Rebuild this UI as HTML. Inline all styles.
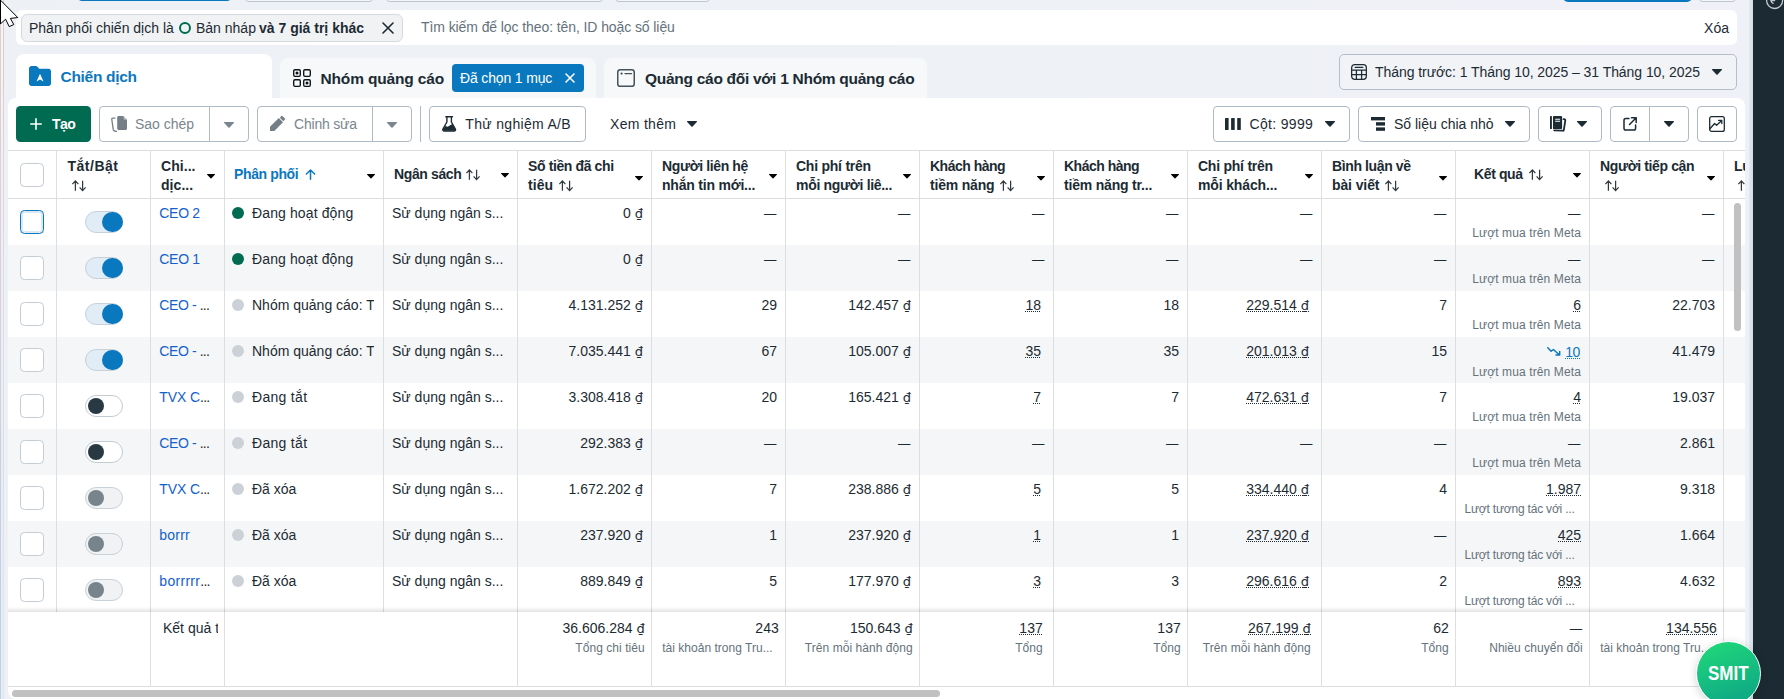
<!DOCTYPE html>
<html lang="vi"><head><meta charset="utf-8"><title>Trình quản lý quảng cáo</title><style>
*{box-sizing:border-box;margin:0;padding:0}
html,body{width:1784px;height:699px;overflow:hidden}
body{position:relative;font-family:"Liberation Sans",sans-serif;font-size:14px;color:#1c2b33;background:linear-gradient(90deg,#edf1f5 0%,#eef1f6 60%,#f0f1f8 100%);line-height:20px}
.a{position:absolute}
.t{position:absolute;white-space:nowrap}
.b{font-weight:700}
.sec{color:#65727b}
.s12{font-size:12px;line-height:16px;letter-spacing:0.05px}
.btn{position:absolute;height:36px;top:106px;border:1px solid #afbac7;border-radius:4px;background:#fff}
.dot{background:linear-gradient(90deg,#1c2b33 50%,rgba(0,0,0,0) 50%) 0 16px/2px 1px repeat-x}
.dotb{color:#0a78be;letter-spacing:-0.4px;background:linear-gradient(90deg,#0a78be 50%,rgba(0,0,0,0) 50%) 0 16px/2px 1px repeat-x}
.row{position:absolute;left:8px;width:1737px;height:46px}
.alt{background:#f5f6f7}
.vl{position:absolute;width:1px;background:#dcdee1}
.cb{position:absolute;left:20px;width:24px;height:24px;border:1px solid #c3cbd3;border-radius:4.5px;background:#fff}
.tg{position:absolute;left:85px;width:38px;height:22px;border-radius:11px}
.tg i{position:absolute;border-radius:50%}
.on{background:#e0edf7;border:1px solid #c9d0d9}
.on i{width:20.4px;height:20.4px;right:-0.5px;top:-0.2px;background:#0a78be}
.off{background:#fff;border:1px solid #c3cbd3}
.off i{width:16px;height:16px;left:2px;top:2px;background:#283943}
.dis{background:#f0f2f4;border:1px solid #c9d0d8}
.dis i{width:16px;height:16px;left:2px;top:2px;background:#77848c}
.st{position:absolute;width:12px;height:12px;border-radius:50%}
.dg{font-family:"DejaVu Sans",sans-serif;font-size:13px}
svg{position:absolute;overflow:visible}
</style></head><body>
<div class="a" style="left:0;top:0;width:1px;height:699px;background:linear-gradient(180deg,#dccfcf 10%,#d9d2da 32%,#c4cfdc 88%)"></div>
<div class="a" style="left:1px;top:0;width:2px;height:699px;background:linear-gradient(180deg,#fdf0ee 10%,#f3ecf4 32%,#e2eefa 88%)"></div>
<div class="a" style="left:3px;top:0;width:1px;height:699px;background:linear-gradient(180deg,#c9d1dc 10%,#d6dde3 32%,#dfe3e8 88%)"></div>
<div class="a" style="left:1745px;top:0;width:8px;height:699px;background:#eef1f5"></div>
<div class="a" style="left:1749px;top:0;width:4px;height:699px;background:linear-gradient(90deg,#e3e9f0,#d3dce6)"></div>
<div class="a" style="left:1753px;top:0;width:31px;height:699px;background:#1c2b33"></div>
<svg style="left:1765px;top:-9px" width="19" height="19" viewBox="0 0 19 19" fill="none" stroke="#c3cbd1" stroke-width="1.3" stroke-linecap="round"><circle cx="9.6" cy="9.5" r="8"/><path d="M9.6 9.5L5.8 9.6M5.8 9.6c.3 1.2 1.2 2.2 2.3 2.7"/></svg>
<div class="a" style="left:76.5px;top:-31px;width:155.5px;height:32px;background:#0a78be;border-radius:5px"></div>
<div class="a" style="left:243.5px;top:-31px;width:130px;height:32.5px;border:1px solid #bcc5cf;border-radius:5px;background:#f4f6f8"></div>
<div class="a" style="left:384.5px;top:-31px;width:219px;height:32.5px;border:1px solid #bcc5cf;border-radius:5px;background:#f4f6f8"></div>
<div class="a" style="left:614px;top:-31px;width:97px;height:32.5px;border:1px solid #bcc5cf;border-radius:5px;background:#f4f6f8"></div>
<div class="a" style="left:1562.5px;top:-30px;width:129.5px;height:31.7px;background:#0a78be;border-radius:5px"></div>
<div class="a" style="left:1698px;top:-31px;width:38.5px;height:32.5px;border:1px solid #bcc5cf;border-radius:5px;background:#f4f6f8"></div>
<div class="a" style="left:16px;top:10px;width:1721px;height:35px;background:#fff;border-radius:6px"></div>
<div class="a" style="left:21px;top:14px;width:382px;height:28px;background:#f1f2f4;border:1px solid #d5dae0;border-radius:6px"></div>
<span class="t " style="left:29px;top:18px;">Phân phối chiến dịch là</span>
<div class="a" style="left:179px;top:22px;width:12px;height:12px;border:2px solid #006b50;border-radius:50%"></div>
<span class="t " style="left:196px;top:18px;">Bản nháp</span>
<span class="t b" style="left:259px;top:18px;">và 7 giá trị khác</span>
<svg style="left:382px;top:22px" width="12" height="12" viewBox="0 0 12 12" stroke="#1c2b33" stroke-width="1.6" stroke-linecap="round"><path d="M1 1l10 10M11 1L1 11"/></svg>
<span class="t sec" style="left:421px;top:17px;letter-spacing:-0.09px">Tìm kiếm để lọc theo: tên, ID hoặc số liệu</span>
<span class="t " style="right:55px;top:18px;">Xóa</span>
<div class="a" style="left:16px;top:54px;width:256px;height:50px;background:#fff;border-radius:8px 8px 0 0"></div>
<div class="a" style="left:280px;top:58px;width:316px;height:40px;background:#f6f8fa;border-radius:8px 8px 0 0"></div>
<div class="a" style="left:604px;top:58px;width:323px;height:40px;background:#f6f8fa;border-radius:8px 8px 0 0"></div>
<svg style="left:29px;top:66px" width="22" height="20" viewBox="0 0 22 20"><path d="M0 2.5C0 1.1 1.1 0 2.5 0h4.2c.8 0 1.5.3 2 1l1 1.2c.3.4.8.6 1.3.6h8.5C20.9 2.8 22 3.9 22 5.3v12.2c0 1.4-1.1 2.5-2.5 2.5h-17C1.1 20 0 18.9 0 17.5z" fill="#0a78be"/><path d="M11 7.7l3.5 7.7-3.5-1.8-3.5 1.8z" fill="#fff"/></svg>
<span class="t b" style="left:60.5px;top:66px;color:#0a78be;font-size:15.5px;line-height:21px;letter-spacing:-0.3px">Chiến dịch</span>
<svg style="left:293px;top:69px" width="18" height="18" viewBox="0 0 18 18" fill="none" stroke="#0a1317" stroke-width="1.350"><rect x=".7" y=".7" width="6.6" height="6.6" rx="1.3"/><rect x="10.7" y=".7" width="6.6" height="6.6" rx="1.3"/><rect x=".7" y="10.7" width="6.6" height="6.6" rx="1.3"/><rect x="10.7" y="10.7" width="6.6" height="6.6" rx="1.3"/><circle cx="4" cy="4" r="1.5" fill="#0a1317" stroke="none"/><circle cx="14" cy="14" r="1.5" fill="#0a1317" stroke="none"/></svg>
<span class="t b" style="left:320.5px;top:68px;font-size:15.5px;line-height:21px;letter-spacing:-0.16px">Nhóm quảng cáo</span>
<div class="a" style="left:452px;top:64px;width:132px;height:28px;background:#0a78be;border-radius:4px"></div>
<span class="t " style="left:460px;top:68px;color:#fff;letter-spacing:-0.15px">Đã chọn 1 mục</span>
<svg style="left:565px;top:73px" width="10" height="10" viewBox="0 0 10 10" stroke="#fff" stroke-width="1.6" stroke-linecap="round"><path d="M1 1l8 8M9 1L1 9"/></svg>
<svg style="left:617px;top:69px" width="18" height="18" viewBox="0 0 18 18" fill="none" stroke="#44525c" stroke-width="1.5"><rect x=".75" y=".75" width="16.5" height="16.5" rx="2.6"/><path d="M8 4.6h6.6" stroke-width="1.3" stroke-linecap="round"/><circle cx="4.6" cy="4.6" r="1.150" fill="#44525c" stroke="none"/></svg>
<span class="t b" style="left:645px;top:68px;font-size:15.5px;line-height:21px;letter-spacing:-0.28px">Quảng cáo đối với 1 Nhóm quảng cáo</span>
<div class="a" style="left:1339px;top:54px;width:398px;height:36px;background:#f1f3f6;border:1px solid #b4becb;border-radius:5px"></div>
<svg style="left:1351px;top:64px" width="16" height="16" viewBox="0 0 16 16" fill="none" stroke="#1c2b33" stroke-width="1.25"><rect x=".65" y=".65" width="14.7" height="14.7" rx="3"/><path d="M4.2 3.4h7.6" stroke-linecap="round"/><path d="M.65 6h14.7M.65 10.6h14.7M5.4 6v9.3M10.6 6v9.3"/></svg>
<span class="t " style="left:1375px;top:62px;letter-spacing:-0.06px">Tháng trước: 1 Tháng 10, 2025 – 31 Tháng 10, 2025</span>
<svg style="left:1711.7px;top:69px" width="10" height="6" viewBox="0 0 10 6"><path d="M0.6 0h8.8c.5 0 .8.6.4 1L5.6 5.5c-.3.4-.9.4-1.2 0L.2 1C-.2.6.1 0 .6 0z" fill="#1c2b33"/></svg>
<div class="a" style="left:8px;top:98px;width:1737px;height:601px;background:#fff;border-radius:8px 8px 0 8px"></div>
<div class="a" style="left:16px;top:106px;width:75px;height:36px;background:#006b50;border-radius:4.5px"></div>
<svg style="left:30px;top:118px" width="12" height="12" viewBox="0 0 12 12" stroke="#fff" stroke-width="1.6" stroke-linecap="round"><path d="M6 .8v10.4M.8 6h10.4"/></svg>
<span class="t b" style="left:52px;top:114px;color:#fff;letter-spacing:-0.6px">Tạo</span>
<div class="btn" style="left:99px;width:150px"></div>
<div class="a" style="left:209px;top:107px;width:1px;height:34px;background:#afbac7"></div>
<svg style="left:111px;top:116px" width="16" height="16" viewBox="0 0 16 16"><path d="M6.2 1.5C6.2.700 6.9 0 7.7 0h4.5L16 3.8v8.7c0 .8-.7 1.5-1.5 1.5H7.7c-.8 0-1.5-.7-1.5-1.5z" fill="#757e87"/><path d="M12.6 0v2.6c0 .6.5 1.1 1.1 1.1H16z" fill="#b9bfc5"/><path d="M3.9 2.2H1.7c-.6 0-1 .5-.9 1.1l1.5 10.6c.1.6.6 1 1.2 1.1l2 .3" fill="none" stroke="#757e87" stroke-width="1.3" stroke-linecap="round"/></svg>
<span class="t " style="left:135px;top:114px;color:#7a868e">Sao chép</span>
<svg style="left:224px;top:122px" width="10" height="6" viewBox="0 0 10 6"><path d="M0.6 0h8.8c.5 0 .8.6.4 1L5.6 5.5c-.3.4-.9.4-1.2 0L.2 1C-.2.6.1 0 .6 0z" fill="#7a868e"/></svg>
<div class="btn" style="left:257px;width:155px"></div>
<div class="a" style="left:372px;top:107px;width:1px;height:34px;background:#afbac7"></div>
<svg style="left:270px;top:116px" width="15" height="15" viewBox="0 0 15 15" fill="#757e87"><path d="M0 15v-4.3L8.8 2l4.2 4.2L4.3 15z"/><rect x="-2.5" y="-1.5" width="5" height="3" rx=".7" transform="translate(12.6 2.4) rotate(45)"/></svg>
<span class="t " style="left:294px;top:114px;color:#7a868e;letter-spacing:-0.2px">Chỉnh sửa</span>
<svg style="left:387px;top:122px" width="10" height="6" viewBox="0 0 10 6"><path d="M0.6 0h8.8c.5 0 .8.6.4 1L5.6 5.5c-.3.4-.9.4-1.2 0L.2 1C-.2.6.1 0 .6 0z" fill="#7a868e"/></svg>
<div class="a" style="left:420px;top:106px;width:1px;height:36px;background:#afbac7"></div>
<div class="btn" style="left:429px;width:157px"></div>
<svg style="left:442px;top:116px" width="14.3" height="15.7" viewBox="0 0 14.3 15.7"><path d="M3.8.7h6.7M4.9.7v5.3L.9 13.1c-.5 1 .2 1.9 1.2 1.9h10.1c1 0 1.7-.9 1.2-1.9L9.4 6V.7" fill="none" stroke="#1c2b33" stroke-width="1.4" stroke-linecap="round" stroke-linejoin="round"/><path d="M3.4 9.9l2.3.8 4.5-2.6 3.1 5.3c.3.6-.1 1.3-.8 1.3H1.8c-.7 0-1.1-.7-.8-1.3z" fill="#1c2b33"/></svg>
<span class="t " style="left:465.3px;top:114px;letter-spacing:0.32px">Thử nghiệm A/B</span>
<span class="t " style="left:610px;top:114px;letter-spacing:0.3px">Xem thêm</span>
<svg style="left:687px;top:121px" width="10" height="6" viewBox="0 0 10 6"><path d="M0.6 0h8.8c.5 0 .8.6.4 1L5.6 5.5c-.3.4-.9.4-1.2 0L.2 1C-.2.6.1 0 .6 0z" fill="#1c2b33"/></svg>
<div class="btn" style="left:1213px;width:137px"></div>
<svg style="left:1225px;top:118px" width="16" height="12" viewBox="0 0 16 12" fill="#1c2b33"><rect x="0" width="3.6" height="12" rx=".4"/><rect x="6.1" width="3.6" height="12" rx=".4"/><rect x="12.2" width="3.6" height="12" rx=".4"/></svg>
<span class="t " style="left:1249.5px;top:114px;letter-spacing:0.33px">Cột: 9999</span>
<svg style="left:1325px;top:121px" width="10" height="6" viewBox="0 0 10 6"><path d="M0.6 0h8.8c.5 0 .8.6.4 1L5.6 5.5c-.3.4-.9.4-1.2 0L.2 1C-.2.6.1 0 .6 0z" fill="#1c2b33"/></svg>
<div class="btn" style="left:1358px;width:172px"></div>
<svg style="left:1371px;top:117px" width="14" height="14" viewBox="0 0 14 14" fill="#1c2b33"><rect x="0" y="0" width="14" height="3.4"/><rect x="5" y="5.2" width="9" height="3.4"/><rect x="5" y="10.4" width="9" height="3.4"/></svg>
<span class="t " style="left:1394px;top:114px;">Số liệu chia nhỏ</span>
<svg style="left:1505px;top:121px" width="10" height="6" viewBox="0 0 10 6"><path d="M0.6 0h8.8c.5 0 .8.6.4 1L5.6 5.5c-.3.4-.9.4-1.2 0L.2 1C-.2.6.1 0 .6 0z" fill="#1c2b33"/></svg>
<div class="btn" style="left:1538px;width:64px"></div>
<svg style="left:1550px;top:116px" width="16" height="16" viewBox="0 0 16 16"><rect x="0" y="0" width="1.9" height="13" rx=".5" fill="#1c2b33"/><path d="M3 1.1C3 .5 3.5 0 4.1 0h6.9c.6 0 1.1.5 1.1 1.1v10.8c0 .6-.5 1.1-1.1 1.1H3z" fill="#1c2b33"/><path d="M5.2 3.3h4.9M5.2 5.3h4.9" stroke="#fff" stroke-width="1.1"/><path d="M13.5 3.1l1.2.3c.4.1.7.5.6.9l-1.5 9.8c-.1.4-.5.7-.9.6L4.2 14.3" fill="none" stroke="#1c2b33" stroke-width="1.8" stroke-linecap="round" stroke-linejoin="round"/></svg>
<svg style="left:1577px;top:121px" width="10" height="6" viewBox="0 0 10 6"><path d="M0.6 0h8.8c.5 0 .8.6.4 1L5.6 5.5c-.3.4-.9.4-1.2 0L.2 1C-.2.6.1 0 .6 0z" fill="#1c2b33"/></svg>
<div class="btn" style="left:1610px;width:79px"></div>
<div class="a" style="left:1649px;top:107px;width:1px;height:34px;background:#afbac7"></div>
<svg style="left:1623px;top:117px" width="14" height="14" viewBox="0 0 14 14" fill="none" stroke="#1c2b33" stroke-width="1.5" stroke-linecap="round" stroke-linejoin="round"><path d="M6 1.5H2.8C1.8 1.5 1 2.3 1 3.3v8c0 1 .8 1.8 1.8 1.8h8c1 0 1.8-.8 1.8-1.8V8M8.5 .8h4.7v4.7M13 1L6.5 7.5"/></svg>
<svg style="left:1664px;top:121px" width="10" height="6" viewBox="0 0 10 6"><path d="M0.6 0h8.8c.5 0 .8.6.4 1L5.6 5.5c-.3.4-.9.4-1.2 0L.2 1C-.2.6.1 0 .6 0z" fill="#1c2b33"/></svg>
<div class="btn" style="left:1697px;width:40px"></div>
<svg style="left:1709px;top:116px" width="16" height="16" viewBox="0 0 16 16" fill="none" stroke="#1c2b33" stroke-width="1.3" stroke-linecap="round" stroke-linejoin="round"><rect x=".7" y=".7" width="14.6" height="14.6" rx="1.9"/><path d="M.9 12.8l4.7-5.3 2 1.7 4.9-4.5M9.6 4.4h3.2v3.2"/></svg>
<div class="a" style="left:8px;top:150px;width:1737px;height:1px;background:#dcdee1"></div>
<div class="a" style="left:8px;top:198px;width:1737px;height:1px;background:#dcdee1"></div>
<div class="row alt" style="top:245px"></div>
<div class="row alt" style="top:337px"></div>
<div class="row alt" style="top:429px"></div>
<div class="row alt" style="top:521px"></div>
<div class="vl" style="left:56px;top:151px;height:461px"></div>
<div class="vl" style="left:150px;top:151px;height:461px"></div>
<div class="vl" style="left:224px;top:151px;height:461px"></div>
<div class="vl" style="left:383px;top:151px;height:461px"></div>
<div class="vl" style="left:517px;top:151px;height:461px"></div>
<div class="vl" style="left:651px;top:151px;height:461px"></div>
<div class="vl" style="left:785px;top:151px;height:461px"></div>
<div class="vl" style="left:919px;top:151px;height:461px"></div>
<div class="vl" style="left:1053px;top:151px;height:461px"></div>
<div class="vl" style="left:1187px;top:151px;height:461px"></div>
<div class="vl" style="left:1321px;top:151px;height:461px"></div>
<div class="vl" style="left:1455px;top:151px;height:461px"></div>
<div class="vl" style="left:1589px;top:151px;height:461px"></div>
<div class="vl" style="left:1723px;top:151px;height:461px"></div>
<div class="cb" style="top:163px"></div>
<span class="t b" style="left:67.5px;top:156px;letter-spacing:0.5px">Tắt/Bật</span>
<svg style="left:71.7px;top:180.2px" width="14" height="11.6" viewBox="0 0 14 11.6" fill="none" stroke="#333a3e" stroke-width="1.25" stroke-linejoin="miter"><path d="M3.4 10.8V1.2M.4 4.2L3.4.9l3 3.3M10.6.8v9.6M7.6 7.4l3 3.3 3-3.3"/></svg>
<span class="t b" style="left:161px;top:156px;letter-spacing:0.05px">Chi...</span>
<span class="t b" style="left:161px;top:175px;letter-spacing:0.05px">dịc...</span>
<svg style="left:207px;top:174.0px" width="8" height="4.5" viewBox="0 0 8.5 4.7"><path d="M.5 0h7.5c.4 0 .6.5.3.8L4.7 4.5c-.25.250-.65.250-.9 0L.2.8C-.1.5.1 0 .5 0z" fill="#000"/></svg>
<span class="t b" style="left:234px;top:164px;color:#0a78be;letter-spacing:-0.38px">Phân phối</span>
<svg style="left:305px;top:169px" width="11" height="11" viewBox="0 0 11 11" fill="none" stroke="#0a78be" stroke-width="1.5" stroke-linecap="round" stroke-linejoin="round"><path d="M5.5 10.2V1M1.4 5L5.5 1l4.1 4"/></svg>
<svg style="left:367px;top:173.5px" width="8" height="4.5" viewBox="0 0 8.5 4.7"><path d="M.5 0h7.5c.4 0 .6.5.3.8L4.7 4.5c-.25.250-.65.250-.9 0L.2.8C-.1.5.1 0 .5 0z" fill="#000"/></svg>
<span class="t b" style="left:394px;top:164px;letter-spacing:-0.38px">Ngân sách</span>
<svg style="left:466.2px;top:169.1px" width="14" height="11.6" viewBox="0 0 14 11.6" fill="none" stroke="#333a3e" stroke-width="1.25" stroke-linejoin="miter"><path d="M3.4 10.8V1.2M.4 4.2L3.4.9l3 3.3M10.6.8v9.6M7.6 7.4l3 3.3 3-3.3"/></svg>
<svg style="left:501px;top:173.0px" width="8" height="4.5" viewBox="0 0 8.5 4.7"><path d="M.5 0h7.5c.4 0 .6.5.3.8L4.7 4.5c-.25.250-.65.250-.9 0L.2.8C-.1.5.1 0 .5 0z" fill="#000"/></svg>
<span class="t b" style="left:528px;top:156px;letter-spacing:-0.38px">Số tiền đã chi</span>
<span class="t b" style="left:528px;top:175px;letter-spacing:0.04px">tiêu</span>
<svg style="left:559px;top:180.2px" width="14" height="11.6" viewBox="0 0 14 11.6" fill="none" stroke="#333a3e" stroke-width="1.25" stroke-linejoin="miter"><path d="M3.4 10.8V1.2M.4 4.2L3.4.9l3 3.3M10.6.8v9.6M7.6 7.4l3 3.3 3-3.3"/></svg>
<svg style="left:635px;top:175.8px" width="8" height="4.5" viewBox="0 0 8.5 4.7"><path d="M.5 0h7.5c.4 0 .6.5.3.8L4.7 4.5c-.25.250-.65.250-.9 0L.2.8C-.1.5.1 0 .5 0z" fill="#000"/></svg>
<span class="t b" style="left:662px;top:156px;letter-spacing:-0.38px">Người liên hệ</span>
<span class="t b" style="left:662px;top:175px;letter-spacing:-0.21px">nhắn tin mới...</span>
<svg style="left:769px;top:173.8px" width="8" height="4.5" viewBox="0 0 8.5 4.7"><path d="M.5 0h7.5c.4 0 .6.5.3.8L4.7 4.5c-.25.250-.65.250-.9 0L.2.8C-.1.5.1 0 .5 0z" fill="#000"/></svg>
<span class="t b" style="left:796px;top:156px;letter-spacing:-0.24px">Chi phí trên</span>
<span class="t b" style="left:796px;top:175px;letter-spacing:-0.31px">mỗi người liê...</span>
<svg style="left:903px;top:173.8px" width="8" height="4.5" viewBox="0 0 8.5 4.7"><path d="M.5 0h7.5c.4 0 .6.5.3.8L4.7 4.5c-.25.250-.65.250-.9 0L.2.8C-.1.5.1 0 .5 0z" fill="#000"/></svg>
<span class="t b" style="left:930px;top:156px;letter-spacing:-0.5px">Khách hàng</span>
<span class="t b" style="left:930px;top:175px;letter-spacing:-0.19px">tiềm năng</span>
<svg style="left:999.5px;top:180.2px" width="14" height="11.6" viewBox="0 0 14 11.6" fill="none" stroke="#333a3e" stroke-width="1.25" stroke-linejoin="miter"><path d="M3.4 10.8V1.2M.4 4.2L3.4.9l3 3.3M10.6.8v9.6M7.6 7.4l3 3.3 3-3.3"/></svg>
<svg style="left:1037px;top:175.8px" width="8" height="4.5" viewBox="0 0 8.5 4.7"><path d="M.5 0h7.5c.4 0 .6.5.3.8L4.7 4.5c-.25.250-.65.250-.9 0L.2.8C-.1.5.1 0 .5 0z" fill="#000"/></svg>
<span class="t b" style="left:1064px;top:156px;letter-spacing:-0.5px">Khách hàng</span>
<span class="t b" style="left:1064px;top:175px;letter-spacing:-0.19px">tiềm năng tr...</span>
<svg style="left:1171px;top:173.8px" width="8" height="4.5" viewBox="0 0 8.5 4.7"><path d="M.5 0h7.5c.4 0 .6.5.3.8L4.7 4.5c-.25.250-.65.250-.9 0L.2.8C-.1.5.1 0 .5 0z" fill="#000"/></svg>
<span class="t b" style="left:1198px;top:156px;letter-spacing:-0.24px">Chi phí trên</span>
<span class="t b" style="left:1198px;top:175px;letter-spacing:-0.14px">mỗi khách...</span>
<svg style="left:1305px;top:173.8px" width="8" height="4.5" viewBox="0 0 8.5 4.7"><path d="M.5 0h7.5c.4 0 .6.5.3.8L4.7 4.5c-.25.250-.65.250-.9 0L.2.8C-.1.5.1 0 .5 0z" fill="#000"/></svg>
<span class="t b" style="left:1332px;top:156px;letter-spacing:-0.38px">Bình luận về</span>
<span class="t b" style="left:1332px;top:175px;letter-spacing:-0.11px">bài viết</span>
<svg style="left:1385px;top:180.2px" width="14" height="11.6" viewBox="0 0 14 11.6" fill="none" stroke="#333a3e" stroke-width="1.25" stroke-linejoin="miter"><path d="M3.4 10.8V1.2M.4 4.2L3.4.9l3 3.3M10.6.8v9.6M7.6 7.4l3 3.3 3-3.3"/></svg>
<svg style="left:1439px;top:175.8px" width="8" height="4.5" viewBox="0 0 8.5 4.7"><path d="M.5 0h7.5c.4 0 .6.5.3.8L4.7 4.5c-.25.250-.65.250-.9 0L.2.8C-.1.5.1 0 .5 0z" fill="#000"/></svg>
<span class="t b" style="left:1474px;top:164px;letter-spacing:-0.38px">Kết quả</span>
<svg style="left:1528.6px;top:169.1px" width="14" height="11.6" viewBox="0 0 14 11.6" fill="none" stroke="#333a3e" stroke-width="1.25" stroke-linejoin="miter"><path d="M3.4 10.8V1.2M.4 4.2L3.4.9l3 3.3M10.6.8v9.6M7.6 7.4l3 3.3 3-3.3"/></svg>
<svg style="left:1573px;top:173.0px" width="8" height="4.5" viewBox="0 0 8.5 4.7"><path d="M.5 0h7.5c.4 0 .6.5.3.8L4.7 4.5c-.25.250-.65.250-.9 0L.2.8C-.1.5.1 0 .5 0z" fill="#000"/></svg>
<span class="t b" style="left:1600px;top:156px;letter-spacing:-0.38px">Người tiếp cận</span>
<svg style="left:1605.2px;top:180.2px" width="14" height="11.6" viewBox="0 0 14 11.6" fill="none" stroke="#333a3e" stroke-width="1.25" stroke-linejoin="miter"><path d="M3.4 10.8V1.2M.4 4.2L3.4.9l3 3.3M10.6.8v9.6M7.6 7.4l3 3.3 3-3.3"/></svg>
<svg style="left:1707px;top:175.8px" width="8" height="4.5" viewBox="0 0 8.5 4.7"><path d="M.5 0h7.5c.4 0 .6.5.3.8L4.7 4.5c-.25.250-.65.250-.9 0L.2.8C-.1.5.1 0 .5 0z" fill="#000"/></svg>
<span class="t b" style="left:1734px;top:156px;letter-spacing:-0.38px;width:11px;overflow:hidden">Lư</span>
<svg style="left:1737.6px;top:180.2px" width="7.4" height="11.6" viewBox="0 0 7.4 11.6" fill="none" stroke="#333a3e" stroke-width="1.25"><path d="M3.4 10.8V1.2M.4 4.2L3.4.9l3 3.3"/></svg>
<div class="cb" style="top:210px;border:1.3px solid #0a78be;box-shadow:0 0 0 2px #dbe9f5 inset;border-radius:4.5px"></div>
<div class="tg on" style="top:211px"><i></i></div>
<span class="t " style="left:159.3px;top:203px;color:#1461cc;letter-spacing:-0.3px">CEO 2</span>
<div class="st" style="left:232px;top:207px;background:#006b50"></div>
<span class="t " style="left:252px;top:203px;letter-spacing:0.12px">Đang hoạt động</span>
<span class="t " style="left:392px;top:203px;">Sử dụng ngân s...</span>
<span class="t " style="right:1141px;top:203px;">0 <span class="dg">₫</span></span>
<span class="t " style="right:1007px;top:203px;"><span style="font-size:12.4px;margin-right:0.6px">—</span></span>
<span class="t " style="right:873px;top:203px;"><span style="font-size:12.4px;margin-right:0.6px">—</span></span>
<span class="t " style="right:739px;top:203px;"><span style="font-size:12.4px;margin-right:0.6px">—</span></span>
<span class="t " style="right:605px;top:203px;"><span style="font-size:12.4px;margin-right:0.6px">—</span></span>
<span class="t " style="right:471px;top:203px;"><span style="font-size:12.4px;margin-right:0.6px">—</span></span>
<span class="t " style="right:337px;top:203px;"><span style="font-size:12.4px;margin-right:0.6px">—</span></span>
<span class="t " style="right:203px;top:203px;"><span style="font-size:12.4px;margin-right:0.6px">—</span></span>
<span class="t s12 sec" style="right:203px;top:225px;letter-spacing:0.12px">Lượt mua trên Meta</span>
<span class="t " style="right:69px;top:203px;"><span style="font-size:12.4px;margin-right:0.6px">—</span></span>
<div class="cb" style="top:256px"></div>
<div class="tg on" style="top:257px"><i></i></div>
<span class="t " style="left:159.3px;top:249px;color:#1461cc;letter-spacing:-0.3px">CEO 1</span>
<div class="st" style="left:232px;top:253px;background:#006b50"></div>
<span class="t " style="left:252px;top:249px;letter-spacing:0.12px">Đang hoạt động</span>
<span class="t " style="left:392px;top:249px;">Sử dụng ngân s...</span>
<span class="t " style="right:1141px;top:249px;">0 <span class="dg">₫</span></span>
<span class="t " style="right:1007px;top:249px;"><span style="font-size:12.4px;margin-right:0.6px">—</span></span>
<span class="t " style="right:873px;top:249px;"><span style="font-size:12.4px;margin-right:0.6px">—</span></span>
<span class="t " style="right:739px;top:249px;"><span style="font-size:12.4px;margin-right:0.6px">—</span></span>
<span class="t " style="right:605px;top:249px;"><span style="font-size:12.4px;margin-right:0.6px">—</span></span>
<span class="t " style="right:471px;top:249px;"><span style="font-size:12.4px;margin-right:0.6px">—</span></span>
<span class="t " style="right:337px;top:249px;"><span style="font-size:12.4px;margin-right:0.6px">—</span></span>
<span class="t " style="right:203px;top:249px;"><span style="font-size:12.4px;margin-right:0.6px">—</span></span>
<span class="t s12 sec" style="right:203px;top:271px;letter-spacing:0.12px">Lượt mua trên Meta</span>
<span class="t " style="right:69px;top:249px;"><span style="font-size:12.4px;margin-right:0.6px">—</span></span>
<div class="cb" style="top:302px"></div>
<div class="tg on" style="top:303px"><i></i></div>
<span class="t " style="left:159.3px;top:295px;"><span style="color:#1461cc;letter-spacing:-0.4px">CEO - </span><span style="letter-spacing:-0.75px">...</span></span>
<div class="st" style="left:232px;top:299px;background:#ccd1d7"></div>
<span class="t " style="left:252px;top:295px;width:122.3px;overflow:hidden">Nhóm quảng cáo: T</span>
<span class="t " style="left:392px;top:295px;">Sử dụng ngân s...</span>
<span class="t " style="right:1141px;top:295px;">4.131.252 <span class="dg">₫</span></span>
<span class="t " style="right:1007px;top:295px;">29</span>
<span class="t " style="right:873px;top:295px;">142.457 <span class="dg">₫</span></span>
<span class="t dot" style="right:743px;top:295px;">18</span>
<span class="t " style="right:605px;top:295px;">18</span>
<span class="t dot" style="right:475px;top:295px;">229.514 <span class="dg">₫</span></span>
<span class="t " style="right:337px;top:295px;">7</span>
<span class="t dot" style="right:203px;top:295px;">6</span>
<span class="t s12 sec" style="right:203px;top:317px;letter-spacing:0.12px">Lượt mua trên Meta</span>
<span class="t " style="right:69px;top:295px;">22.703</span>
<div class="cb" style="top:348px"></div>
<div class="tg on" style="top:349px"><i></i></div>
<span class="t " style="left:159.3px;top:341px;"><span style="color:#1461cc;letter-spacing:-0.4px">CEO - </span><span style="letter-spacing:-0.75px">...</span></span>
<div class="st" style="left:232px;top:345px;background:#ccd1d7"></div>
<span class="t " style="left:252px;top:341px;width:122.3px;overflow:hidden">Nhóm quảng cáo: T</span>
<span class="t " style="left:392px;top:341px;">Sử dụng ngân s...</span>
<span class="t " style="right:1141px;top:341px;">7.035.441 <span class="dg">₫</span></span>
<span class="t " style="right:1007px;top:341px;">67</span>
<span class="t " style="right:873px;top:341px;">105.007 <span class="dg">₫</span></span>
<span class="t dot" style="right:743px;top:341px;">35</span>
<span class="t " style="right:605px;top:341px;">35</span>
<span class="t dot" style="right:475px;top:341px;">201.013 <span class="dg">₫</span></span>
<span class="t " style="right:337px;top:341px;">15</span>
<span class="t dotb" style="right:204px;top:342px;">10</span>
<svg style="left:1547px;top:347.3px" width="14" height="9" viewBox="0 0 14 9" fill="none" stroke="#0a78be" stroke-width="1.5" stroke-linecap="round" stroke-linejoin="round"><path d="M.8 .8l3.3 3.4 2.3-1.7 5.8 5.2M9 8h3.7V4.4"/></svg>
<span class="t s12 sec" style="right:203px;top:364px;letter-spacing:0.12px">Lượt mua trên Meta</span>
<span class="t " style="right:69px;top:341px;">41.479</span>
<div class="cb" style="top:394px"></div>
<div class="tg off" style="top:395px"><i></i></div>
<span class="t " style="left:159.3px;top:387px;"><span style="color:#1461cc;letter-spacing:-0.1px">TVX C</span><span style="letter-spacing:-0.75px">...</span></span>
<div class="st" style="left:232px;top:391px;background:#ccd1d7"></div>
<span class="t " style="left:252px;top:387px;letter-spacing:0.3px">Đang tắt</span>
<span class="t " style="left:392px;top:387px;">Sử dụng ngân s...</span>
<span class="t " style="right:1141px;top:387px;">3.308.418 <span class="dg">₫</span></span>
<span class="t " style="right:1007px;top:387px;">20</span>
<span class="t " style="right:873px;top:387px;">165.421 <span class="dg">₫</span></span>
<span class="t dot" style="right:743px;top:387px;">7</span>
<span class="t " style="right:605px;top:387px;">7</span>
<span class="t dot" style="right:475px;top:387px;">472.631 <span class="dg">₫</span></span>
<span class="t " style="right:337px;top:387px;">7</span>
<span class="t dot" style="right:203px;top:387px;">4</span>
<span class="t s12 sec" style="right:203px;top:409px;letter-spacing:0.12px">Lượt mua trên Meta</span>
<span class="t " style="right:69px;top:387px;">19.037</span>
<div class="cb" style="top:440px"></div>
<div class="tg off" style="top:441px"><i></i></div>
<span class="t " style="left:159.3px;top:433px;"><span style="color:#1461cc;letter-spacing:-0.4px">CEO - </span><span style="letter-spacing:-0.75px">...</span></span>
<div class="st" style="left:232px;top:437px;background:#ccd1d7"></div>
<span class="t " style="left:252px;top:433px;letter-spacing:0.3px">Đang tắt</span>
<span class="t " style="left:392px;top:433px;">Sử dụng ngân s...</span>
<span class="t " style="right:1141px;top:433px;">292.383 <span class="dg">₫</span></span>
<span class="t " style="right:1007px;top:433px;"><span style="font-size:12.4px;margin-right:0.6px">—</span></span>
<span class="t " style="right:873px;top:433px;"><span style="font-size:12.4px;margin-right:0.6px">—</span></span>
<span class="t " style="right:739px;top:433px;"><span style="font-size:12.4px;margin-right:0.6px">—</span></span>
<span class="t " style="right:605px;top:433px;"><span style="font-size:12.4px;margin-right:0.6px">—</span></span>
<span class="t " style="right:471px;top:433px;"><span style="font-size:12.4px;margin-right:0.6px">—</span></span>
<span class="t " style="right:337px;top:433px;"><span style="font-size:12.4px;margin-right:0.6px">—</span></span>
<span class="t " style="right:203px;top:433px;"><span style="font-size:12.4px;margin-right:0.6px">—</span></span>
<span class="t s12 sec" style="right:203px;top:455px;letter-spacing:0.12px">Lượt mua trên Meta</span>
<span class="t " style="right:69px;top:433px;">2.861</span>
<div class="cb" style="top:486px"></div>
<div class="tg dis" style="top:487px"><i></i></div>
<span class="t " style="left:159.3px;top:479px;"><span style="color:#1461cc;letter-spacing:-0.1px">TVX C</span><span style="letter-spacing:-0.75px">...</span></span>
<div class="st" style="left:232px;top:483px;background:#ccd1d7"></div>
<span class="t " style="left:252px;top:479px;">Đã xóa</span>
<span class="t " style="left:392px;top:479px;">Sử dụng ngân s...</span>
<span class="t " style="right:1141px;top:479px;">1.672.202 <span class="dg">₫</span></span>
<span class="t " style="right:1007px;top:479px;">7</span>
<span class="t " style="right:873px;top:479px;">238.886 <span class="dg">₫</span></span>
<span class="t dot" style="right:743px;top:479px;">5</span>
<span class="t " style="right:605px;top:479px;">5</span>
<span class="t dot" style="right:475px;top:479px;">334.440 <span class="dg">₫</span></span>
<span class="t " style="right:337px;top:479px;">4</span>
<span class="t dot" style="right:203px;top:479px;">1.987</span>
<span class="t s12 sec" style="left:1464.5px;top:501px;letter-spacing:-0.195px">Lượt tương tác với ...</span>
<span class="t " style="right:69px;top:479px;">9.318</span>
<div class="cb" style="top:532px"></div>
<div class="tg dis" style="top:533px"><i></i></div>
<span class="t " style="left:159.3px;top:525px;color:#1461cc;letter-spacing:0.2px">borrr</span>
<div class="st" style="left:232px;top:529px;background:#ccd1d7"></div>
<span class="t " style="left:252px;top:525px;">Đã xóa</span>
<span class="t " style="left:392px;top:525px;">Sử dụng ngân s...</span>
<span class="t " style="right:1141px;top:525px;">237.920 <span class="dg">₫</span></span>
<span class="t " style="right:1007px;top:525px;">1</span>
<span class="t " style="right:873px;top:525px;">237.920 <span class="dg">₫</span></span>
<span class="t dot" style="right:743px;top:525px;">1</span>
<span class="t " style="right:605px;top:525px;">1</span>
<span class="t dot" style="right:475px;top:525px;">237.920 <span class="dg">₫</span></span>
<span class="t " style="right:337px;top:525px;"><span style="font-size:12.4px;margin-right:0.6px">—</span></span>
<span class="t dot" style="right:203px;top:525px;">425</span>
<span class="t s12 sec" style="left:1464.5px;top:547px;letter-spacing:-0.195px">Lượt tương tác với ...</span>
<span class="t " style="right:69px;top:525px;">1.664</span>
<div class="cb" style="top:578px"></div>
<div class="tg dis" style="top:579px"><i></i></div>
<span class="t " style="left:159.3px;top:571px;"><span style="color:#1461cc;letter-spacing:0.3px">borrrrr</span><span style="letter-spacing:-0.75px">...</span></span>
<div class="st" style="left:232px;top:575px;background:#ccd1d7"></div>
<span class="t " style="left:252px;top:571px;">Đã xóa</span>
<span class="t " style="left:392px;top:571px;">Sử dụng ngân s...</span>
<span class="t " style="right:1141px;top:571px;">889.849 <span class="dg">₫</span></span>
<span class="t " style="right:1007px;top:571px;">5</span>
<span class="t " style="right:873px;top:571px;">177.970 <span class="dg">₫</span></span>
<span class="t dot" style="right:743px;top:571px;">3</span>
<span class="t " style="right:605px;top:571px;">3</span>
<span class="t dot" style="right:475px;top:571px;">296.616 <span class="dg">₫</span></span>
<span class="t " style="right:337px;top:571px;">2</span>
<span class="t dot" style="right:203px;top:571px;">893</span>
<span class="t s12 sec" style="left:1464.5px;top:593px;letter-spacing:-0.195px">Lượt tương tác với ...</span>
<span class="t " style="right:69px;top:571px;">4.632</span>
<div class="a" style="left:1734px;top:203px;width:7px;height:128px;background:#c1c1c1;border-radius:4px"></div>
<div class="a" style="left:8px;top:612px;width:1737px;height:75px;background:#fff;border-bottom:1px solid #dcdee1"></div>
<div class="a" style="left:8px;top:607px;width:1737px;height:5px;background:linear-gradient(to bottom,rgba(0,0,0,0),rgba(0,0,0,.115))"></div>
<div class="vl" style="left:150px;top:612px;height:74px"></div>
<div class="vl" style="left:224px;top:612px;height:74px"></div>
<div class="vl" style="left:517px;top:612px;height:74px"></div>
<div class="vl" style="left:651px;top:612px;height:74px"></div>
<div class="vl" style="left:785px;top:612px;height:74px"></div>
<div class="vl" style="left:919px;top:612px;height:74px"></div>
<div class="vl" style="left:1053px;top:612px;height:74px"></div>
<div class="vl" style="left:1187px;top:612px;height:74px"></div>
<div class="vl" style="left:1321px;top:612px;height:74px"></div>
<div class="vl" style="left:1455px;top:612px;height:74px"></div>
<div class="vl" style="left:1589px;top:612px;height:74px"></div>
<div class="vl" style="left:1723px;top:612px;height:74px"></div>
<span class="t " style="left:163px;top:618px;width:55.3px;overflow:hidden">Kết quả t</span>
<span class="t " style="right:1139.3px;top:618px;">36.606.284 <span class="dg">₫</span></span>
<span class="t s12 sec" style="right:1139.3px;top:640px;">Tổng chi tiêu</span>
<span class="t " style="right:1005.3px;top:618px;">243</span>
<span class="t s12 sec" style="left:662.2px;top:640px;letter-spacing:0.02px">tài khoản trong Tru...</span>
<span class="t " style="right:871.3px;top:618px;">150.643 <span class="dg">₫</span></span>
<span class="t s12 sec" style="right:871.3px;top:640px;">Trên mỗi hành động</span>
<span class="t dot" style="right:741.3px;top:618px;">137</span>
<span class="t s12 sec" style="right:741.3px;top:640px;">Tổng</span>
<span class="t " style="right:603.3px;top:618px;">137</span>
<span class="t s12 sec" style="right:603.3px;top:640px;">Tổng</span>
<span class="t dot" style="right:473.29999999999995px;top:618px;">267.199 <span class="dg">₫</span></span>
<span class="t s12 sec" style="right:473.29999999999995px;top:640px;">Trên mỗi hành động</span>
<span class="t " style="right:335.29999999999995px;top:618px;">62</span>
<span class="t s12 sec" style="right:335.29999999999995px;top:640px;">Tổng</span>
<span class="t " style="right:201.29999999999995px;top:618px;"><span style="font-size:12.4px;margin-right:0.6px">—</span></span>
<span class="t s12 sec" style="right:201.29999999999995px;top:640px;">Nhiều chuyển đổi</span>
<span class="t dot" style="right:67.29999999999995px;top:618px;">134.556</span>
<span class="t s12 sec" style="left:1600.2px;top:640px;letter-spacing:0.02px">tài khoản trong Tru...</span>
<div class="a" style="left:12px;top:690px;width:928px;height:7px;background:#c1c1c1;border-radius:4px"></div>
<div class="a" style="left:1696px;top:641px;width:65px;height:65px;border-radius:50%;background:linear-gradient(160deg,#1ed57a 10%,#10ac84 80%);border:1.5px solid #fff;box-shadow:0 2px 8px rgba(0,0,0,.18)"></div>
<span class="t b" style="left:1708px;top:661px;color:#fff;font-size:21px;line-height:24px;transform:scaleX(.81);transform-origin:0 0">SMIT</span>
<svg style="left:0;top:0" width="20" height="28" viewBox="0 0 20 28"><path d="M.5 .2L17.8 17.6l-7.4.8 3.4 6.2-4.6 2-3.6-7.4L.8 23.6H.5z" fill="#fff" stroke="#000" stroke-width="1" stroke-linejoin="miter"/><rect x="0" y="0" width="1" height="24" fill="#000"/></svg>
</body></html>
